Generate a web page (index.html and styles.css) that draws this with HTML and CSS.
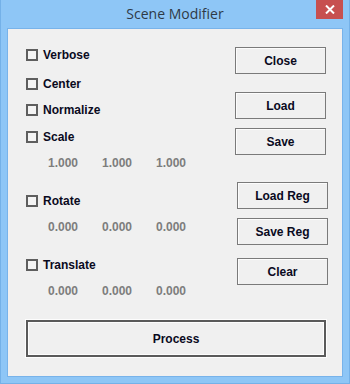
FILE: index.html
```html
<!DOCTYPE html>
<html lang="en">
<head>
  <meta charset="UTF-8" />
  <title>Scene Modifier</title>
  <link rel="stylesheet" href="styles.css">
</head>
<body>
  <div class="window">
    <div class="titlebar">
      <span class="title">Scene Modifier</span>
      <button class="close-x" aria-label="Close">
        <svg width="10" height="9" viewBox="0 0 10 9">
          <path d="M1 0.5 L9 8.5 M9 0.5 L1 8.5" stroke="#fff" stroke-width="2"/>
        </svg>
      </button>
    </div>

    <div class="client">
      <div class="top">
        <div class="options">
          <label class="row"><span class="box"></span>Verbose</label>
          <label class="row g13"><span class="box"></span>Center</label>
          <label class="row g10"><span class="box"></span>Normalize</label>
          <label class="row g11"><span class="box"></span>Scale</label>
          <div class="row g10 values"><span>1.000</span><span>1.000</span><span>1.000</span></div>
          <label class="row g22"><span class="box"></span>Rotate</label>
          <div class="row g10 values"><span>0.000</span><span>0.000</span><span>0.000</span></div>
          <label class="row g22"><span class="box"></span>Translate</label>
          <div class="row g10 values"><span>0.000</span><span>0.000</span><span>0.000</span></div>
        </div>

        <div class="actions">
          <button class="btn">Close</button>
          <button class="btn m19">Load</button>
          <button class="btn m9">Save</button>
          <button class="btn m27 shift">Load Reg</button>
          <button class="btn m9 shift">Save Reg</button>
          <button class="btn m13 shift">Clear</button>
        </div>
      </div>

      <button class="btn process">Process</button>
    </div>
  </div>
</body>
</html>
```

FILE: styles.css
```css
body {
  margin: 0;
  font-family: "Liberation Sans", Arial, sans-serif;
  background: #8ec6f6;
}

.window {
  width: 350px;
  height: 384px;
  box-sizing: border-box;
  background: #8ec6f6;
  border: 1px solid #74b1e8;
  border-top: none;
  display: flex;
  flex-direction: column;
  padding: 0 6px 6px;
}

.titlebar {
  height: 28px;
  position: relative;
  display: flex;
  align-items: center;
  justify-content: center;
}

.title {
  font-family: "Open Sans", "Noto Sans", sans-serif;
  font-size: 14px;
  color: #2e3a46;
  margin-top: -1px;
}

.close-x {
  position: absolute;
  top: 0;
  right: 0;
  width: 27px;
  height: 19px;
  border: none;
  padding: 0;
  background: #c75050;
  display: flex;
  align-items: center;
  justify-content: center;
}

.client {
  flex: 1;
  background: #f0f0f0;
  border: 1px solid #78b3ea;
  padding: 18px 0 0 18px;
  display: flex;
  flex-direction: column;
}

.top {
  display: flex;
}

.options {
  width: 209px;
  display: flex;
  flex-direction: column;
}

.row {
  height: 16px;
  display: flex;
  align-items: center;
  font-size: 12px;
  font-weight: bold;
  color: #0a0a1e;
}

.box {
  width: 8px;
  height: 8px;
  border: 2px solid #5e5e5e;
  background: #f4f4f4;
  margin-right: 5px;
}

.values {
  padding-left: 22px;
  color: #7d7d7d;
}

.values span {
  width: 54px;
}

.g10 { margin-top: 10px; }
.g11 { margin-top: 11px; }
.g13 { margin-top: 13px; }
.g22 { margin-top: 22px; }

.actions {
  display: flex;
  flex-direction: column;
}

.btn {
  width: 91px;
  height: 27px;
  background: #f0f0f0;
  border: 1px solid #7a7a7a;
  box-shadow: inset 1px 1px 0 #fcfcfc;
  font-family: "Liberation Sans", Arial, sans-serif;
  font-size: 12px;
  font-weight: bold;
  color: #0a0a1e;
  padding: 0;
}

.m9 { margin-top: 9px; }
.m13 { margin-top: 13px; }
.m19 { margin-top: 18px; }
.m27 { margin-top: 27px; }
.shift { margin-left: 2px; }

.process {
  width: 300px;
  height: 37px;
  margin-top: 21px;
  border: 2px solid #5a5a5a;
  box-shadow: 0 0 0 1px #fdfdfd, inset 0 0 0 1px #fdfdfd;
}
```
